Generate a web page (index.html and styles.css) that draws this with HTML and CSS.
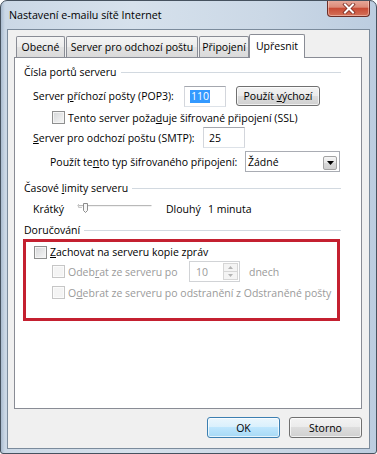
FILE: index.html
```html
<!DOCTYPE html>
<html lang="cs">
<head>
<meta charset="utf-8">
<title>Nastavení e-mailu sítě Internet</title>
<link rel="stylesheet" href="styles.css">
</head>
<body>
<div class="window">
  <div class="titlebar">
    <span class="title">Nastavení e-mailu sítě Internet</span>
    <span class="close">
      <svg width="14" height="11" viewBox="0 0 14 11">
        <path d="M3 1.5 L11 9.5 M11 1.5 L3 9.5" stroke="#7a2b22" stroke-width="3.6" stroke-linecap="square" fill="none"/>
        <path d="M3 1.5 L11 9.5 M11 1.5 L3 9.5" stroke="#ffffff" stroke-width="2" stroke-linecap="square" fill="none"/>
      </svg>
    </span>
  </div>
  <div class="client">
    <div class="tabs">
      <div class="tab t1">Obecné</div>
      <div class="tab t2">Server pro odchozí poštu</div>
      <div class="tab t3">Připojení</div>
      <div class="tab active">Upřesnit</div>
    </div>
    <div class="panel">
      <div class="group h1"><span>Čísla portů serveru</span><i class="rule"></i></div>

      <div class="row r1">
        <span class="lbl w151">Server <u>p</u>říchozí pošty (POP3):</span>
        <span class="textbox w42"><span class="sel">110</span></span>
        <span class="btn b-default"><span>Použít <u>v</u>ýchozí</span></span>
      </div>

      <div class="row r2">
        <span class="check"></span>
        <span class="clabel">Tento server poža<u>d</u>uje šifrované připojení (SSL)</span>
      </div>

      <div class="row r3">
        <span class="lbl w170"><u>S</u>erver pro odchozí poštu (SMTP):</span>
        <span class="textbox w42"><span class="val">25</span></span>
      </div>

      <div class="row r4">
        <span class="lbl w195">Použít te<u>n</u>to typ šifrovaného připojení:</span>
        <span class="combo">
          <span class="val">Žádné</span>
          <span class="drop">
            <svg width="7" height="4" viewBox="0 0 7 4"><path d="M0 0 H7 L3.5 4 Z" fill="#000"/></svg>
          </span>
        </span>
      </div>

      <div class="group h2"><span>Časové <u>l</u>imity serveru</span><i class="rule"></i></div>

      <div class="row rs">
        <span class="lbl w44">Krátký</span>
        <svg class="slider" width="76" height="12" viewBox="0 0 76 12">
          <path d="M0.5 3.5 H74.5" stroke="#b9b9b9" stroke-width="1"/>
          <path d="M0.5 4.5 H74.5" stroke="#f2f2f2" stroke-width="1"/>
          <path d="M1.5 2 V5.5 H5" stroke="#c7c7c7" stroke-width="1" fill="none"/>
          <path d="M6.5 1.5 H10.5 V8.5 L8.5 10.5 L6.5 8.5 Z" fill="#f7f7f7" stroke="#8d8d8d" stroke-width="1"/>
        </svg>
        <span class="lbl w42 ml13">Dlouhý</span>
        <span>1 minuta</span>
      </div>

      <div class="group h3"><span>Doručování</span><i class="rule"></i></div>

      <div class="redbox">
        <div class="row c1">
          <span class="check"></span>
          <span class="clabel"><u>Z</u>achovat na serveru kopie zpráv</span>
        </div>
        <div class="row c2 dis">
          <span class="check off"></span>
          <span class="clabel w121">Odeb<u>r</u>at ze serveru po</span>
          <span class="spin">
            <span class="val">10</span>
            <span class="spinbtns">
              <span class="sb"><svg width="5" height="3" viewBox="0 0 5 3"><path d="M0 3 H5 L2.5 0 Z" fill="#b4b4b4"/></svg></span>
              <span class="sb"><svg width="5" height="3" viewBox="0 0 5 3"><path d="M0 0 H5 L2.5 3 Z" fill="#b4b4b4"/></svg></span>
            </span>
          </span>
          <span class="dnech">dnech</span>
        </div>
        <div class="row c3 dis">
          <span class="check off"></span>
          <span class="clabel">O<u>d</u>ebrat ze serveru po odstranění z Odstraněné pošty</span>
        </div>
      </div>
    </div>
    <div class="buttons">
      <span class="btn btn-ok">OK</span>
      <span class="btn btn-std">Storno</span>
    </div>
  </div>
</div>
</body>
</html>
```

FILE: styles.css
```css
* { box-sizing: border-box; }

body {
  margin: 0;
  background: #ffffff;
  font-family: "Open Sans", "Noto Sans", "DejaVu Sans", sans-serif;
  font-size: 10.5px;
  color: #000;
}

u { text-decoration: underline; text-underline-offset: 1px; }

.window {
  width: 377px;
  height: 454px;
  border: 1px solid #46525f;
  border-radius: 7px 7px 3px 3px;
  background: linear-gradient(90deg, #a9bbcf 0px, #cbd8e6 4px, #d6e1ec 35%, #cbd8e6 70%, #bccde0 100%);
  padding: 0 6px 4px 6px;
  display: flex;
  flex-direction: column;
  overflow: hidden;
}

.titlebar {
  flex: none;
  height: 28px;
  display: flex;
  justify-content: space-between;
  align-items: flex-start;
}

.title {
  margin: 7px 0 0 2px;
  font-size: 10.7px;
  line-height: 15px;
  color: #000;
}

.close {
  width: 43px;
  height: 17px;
  margin-top: -1px;
  border: 1px solid #6b2e28;
  border-top: none;
  border-radius: 0 0 4px 4px;
  background: linear-gradient(#e8ab9d 0%, #dc8a78 45%, #c84b35 52%, #d47159 100%);
  display: flex;
  align-items: center;
  justify-content: center;
  box-shadow: inset 0 0 0 1px rgba(255, 220, 210, 0.5);
}

.client {
  flex: none;
  height: 420px;
  border: 1px solid #7b8b9c;
  background: #f0f0f0;
  display: flex;
  flex-direction: column;
}

.tabs {
  flex: none;
  height: 27px;
  display: flex;
  align-items: flex-end;
  padding-left: 8px;
  position: relative;
  z-index: 2;
}

.tab {
  height: 21px;
  margin-right: 1px;
  border: 1px solid #898c95;
  border-bottom: none;
  border-radius: 2px 2px 0 0;
  background: linear-gradient(#f5f5f5, #ececec 50%, #e3e3e3 50%, #dadada);
  display: flex;
  align-items: center;
  justify-content: center;
  white-space: nowrap;
  color: #000;
}

.t1 { width: 49px; }
.t2 { width: 132px; }
.t3 { width: 50px; }

.tab.active {
  width: 56px;
  height: 24px;
  margin-bottom: -1px;
  margin-left: -1px;
  padding-bottom: 2px;
  background: #ffffff;
}

.panel {
  flex: none;
  height: 352px;
  margin: 0 7px 0 6px;
  border: 1px solid #898c95;
  background: #ffffff;
  padding: 6px 20px 0 0;
  display: flex;
  flex-direction: column;
}

.group {
  display: flex;
  align-items: center;
  gap: 4px;
  padding-left: 9px;
  height: 16px;
}

.rule {
  flex: 1;
  height: 1px;
  background: #d2d9e0;
  margin-top: 1px;
}

.row {
  display: flex;
  align-items: center;
}

.lbl { display: inline-block; white-space: nowrap; }
.w151 { width: 151px; }
.w170 { width: 170px; }
.w195 { width: 195px; }
.w44 { width: 44px; }
.w42 { width: 42px; }
.w121 { width: 121px; }
.ml13 { margin-left: 13px; }

.r1 { height: 22px; margin-top: 5px; padding-left: 18px; }
.r2 { height: 19px; margin-top: 1px; padding-left: 37px; }
.r3 { height: 21px; padding-left: 18px; }
.r4 { height: 21px; margin-top: 3px; padding-left: 35px; }
.h2 { margin-top: 8px; height: 15px; }
.rs { height: 16px; margin-top: 6px; padding-left: 18px; }
.h3 { margin-top: 5px; }

.textbox {
  height: 21px;
  border: 1px solid #abadb3;
  border-color: #a4a7ae #d3d6dc #dde2e8 #d3d6dc;
  background: #fff;
  display: flex;
  align-items: center;
  padding-left: 5px;
}

.sel {
  background: #3399ff;
  color: #fff;
  padding: 0 1px;
  line-height: 13px;
}

.btn {
  display: flex;
  align-items: center;
  justify-content: center;
  height: 21px;
  border: 1px solid #707070;
  border-radius: 3px;
  background: linear-gradient(#f3f3f3, #ebebeb 50%, #dddddd 50%, #d0d0d0);
  box-shadow: inset 0 0 0 1px rgba(255, 255, 255, 0.7);
  color: #000;
  white-space: nowrap;
}

.b-default {
  width: 84px;
  height: 20px;
  margin-left: 10px;
}

.check {
  width: 13px;
  height: 13px;
  flex: none;
  border: 1px solid #8e8f8f;
  background: linear-gradient(135deg, #d4d6d8, #f7f7f7);
  box-shadow: inset 0 0 0 1px #f4f4f4;
}

.check.off {
  border-color: #c6c6c6;
  background: #f4f4f4;
  box-shadow: inset 0 0 0 1px #fbfbfb;
}

.clabel { margin-left: 3px; white-space: nowrap; }

.combo {
  width: 95px;
  height: 21px;
  border: 1px solid #a9acb3;
  background: #fff;
  display: flex;
  align-items: center;
  justify-content: space-between;
  padding: 0 2px 0 2px;
}

.drop {
  width: 14px;
  height: 14px;
  border: 1px solid #a3a3a3;
  border-radius: 2px;
  background: linear-gradient(#f6f6f6, #e6e6e6 50%, #d9d9d9 50%, #cfcfcf);
  display: flex;
  align-items: center;
  justify-content: center;
  margin-top: 2px;
}

.slider { flex: none; margin-top: -3px; }

.redbox {
  margin: 1px 0 0 8px;
  width: 317px;
  height: 82px;
  border: 3px solid #c42030;
  display: flex;
  flex-direction: column;
}

.c1 { height: 16px; margin-top: 2px; padding-left: 8px; }
.c2 { height: 21px; margin-top: 1px; padding-left: 26px; }
.c3 { height: 17px; margin-top: 2px; padding-left: 26px; }

.dis { color: #9a9a9a; }

.spin {
  width: 51px;
  height: 21px;
  border: 1px solid #d1d3d6;
  background: #fff;
  display: flex;
  align-items: center;
  justify-content: space-between;
  padding: 1px 1px 1px 6px;
}

.spinbtns {
  width: 15px;
  height: 17px;
  display: flex;
  flex-direction: column;
}

.sb {
  flex: 1;
  border: 1px solid #d6d6d6;
  background: #f4f4f4;
  display: flex;
  align-items: center;
  justify-content: center;
}

.sb + .sb { border-top: none; }

.dnech { margin-left: 9px; }

.buttons {
  flex: none;
  height: 21px;
  margin-top: 8px;
  padding-right: 7px;
  display: flex;
  justify-content: flex-end;
  gap: 9px;
}

.btn-ok {
  width: 73px;
  border-color: #3c7fb1;
  background: linear-gradient(#eaf6fd, #d9f0fc 50%, #bee6fd 50%, #a7d9f5);
}

.btn-std { width: 73px; }
```
